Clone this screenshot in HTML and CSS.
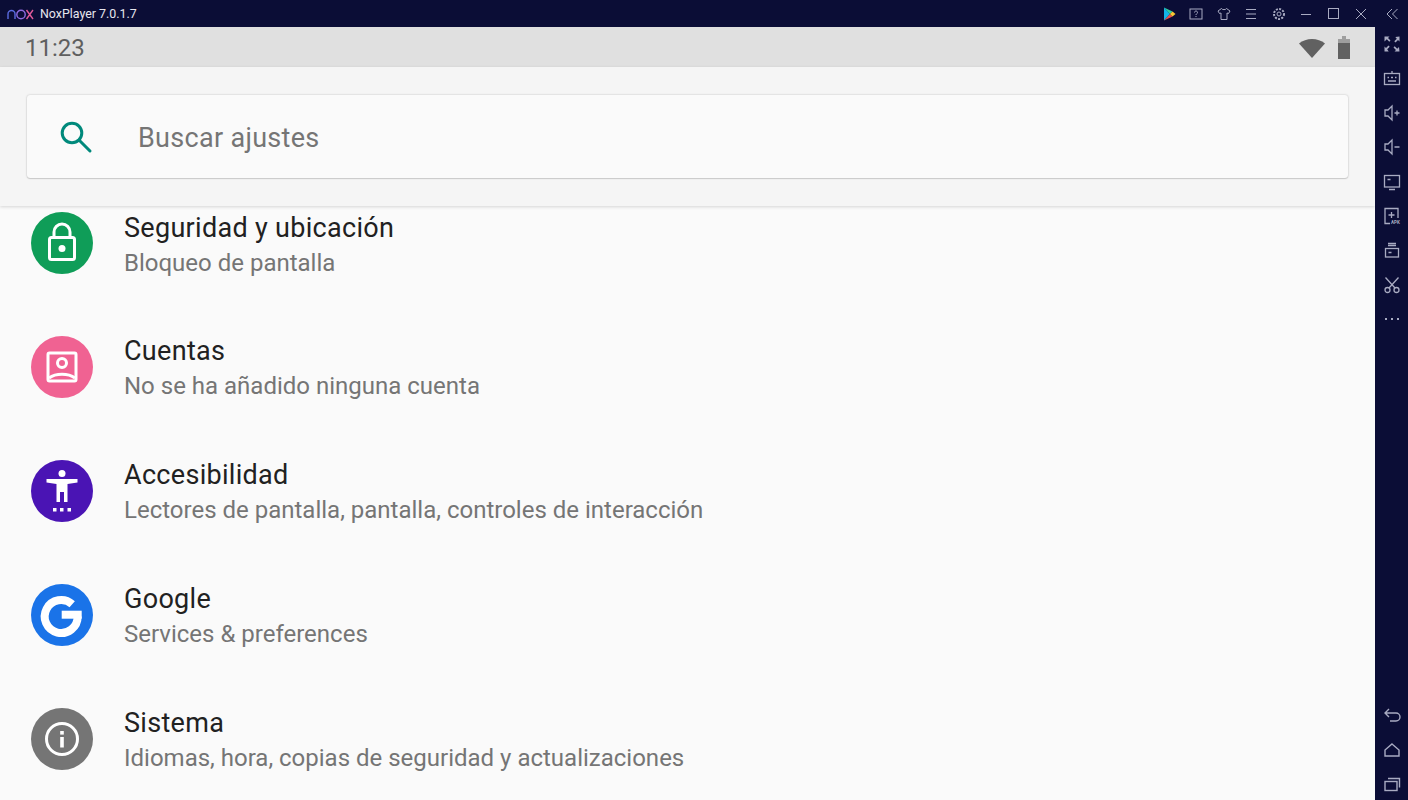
FILE: index.html
```html
<!DOCTYPE html>
<html lang="es">
<head>
    <meta charset="UTF-8">
    <title>NoxPlayer 7.0.1.7</title>
    <link rel="stylesheet" href="styles.css">
</head>
<body>

<div class="titlebar">
    <div class="brand">
        <svg class="nox-logo" width="27" height="12" viewBox="0 0 27 12" fill="none" stroke-width="1.400">
            <path d="M1 11V6a3.500 3.500 0 0 1 7 0v5" stroke="#5a6be0"/>
            <circle cx="14" cy="6.500" r="4.200" stroke="#8f6be0"/>
            <path d="M19.500 2l6.500 9M26 2l-6.500 9" stroke="#e05a9a"/>
        </svg>
        <span class="brand-name">NoxPlayer 7.0.1.7</span>
    </div>
    <div class="window-tools">
        <svg class="tool" width="14" height="14" viewBox="0 0 14 14">
            <path d="M2 0.500v13L8 7z" fill="#12b5e8"/>
            <path d="M2 0.500L8 7l2.500-2.500z" fill="#2fd0a0"/>
            <path d="M2 13.500L8 7l2.500 2.500z" fill="#e8504a"/>
            <path d="M8 7l2.500-2.500L13.500 7l-3 2.500z" fill="#f7c733"/>
        </svg>
        <svg class="tool" width="14" height="14" viewBox="0 0 14 14" fill="none" stroke="#a9abc2">
            <rect x="1" y="2" width="12" height="10"/>
            <path d="M5.500 5.500c0-2 3-2 3 0 0 1.200-1.500 1.200-1.500 2.500M7 9v1"/>
        </svg>
        <svg class="tool" width="14" height="14" viewBox="0 0 14 14" fill="none" stroke="#a9abc2">
            <path d="M4.500 1.500L1 4l1.500 2.500L4 6v6.500h6V6l1.500.5L13 4 9.500 1.500c-.5 1.500-4.500 1.500-5 0z"/>
        </svg>
        <svg class="tool" width="14" height="14" viewBox="0 0 14 14" fill="none" stroke="#a9abc2">
            <path d="M2 2.500h10M2 7h10M2 11.500h10"/>
        </svg>
        <svg class="tool" width="14" height="14" viewBox="0 0 14 14" fill="none" stroke="#a9abc2">
            <circle cx="7" cy="7" r="2"/>
            <circle cx="7" cy="7" r="5" stroke-width="2" stroke-dasharray="2 1.300"/>
        </svg>
        <svg class="tool" width="14" height="14" viewBox="0 0 14 14" fill="none" stroke="#a9abc2">
            <path d="M2 7.500h10"/>
        </svg>
        <svg class="tool" width="14" height="14" viewBox="0 0 14 14" fill="none" stroke="#a9abc2">
            <rect x="1.500" y="1.500" width="10" height="10"/>
        </svg>
        <svg class="tool" width="14" height="14" viewBox="0 0 14 14" fill="none" stroke="#a9abc2">
            <path d="M2 2l10 10M12 2L2 12"/>
        </svg>
        <svg class="tool collapse" width="14" height="14" viewBox="0 0 14 14" fill="none" stroke="#a9abc2">
            <path d="M7 2L2 7l5 5M12.500 2l-5 5 5 5"/>
        </svg>
    </div>
</div>

<div class="main">
    <div class="screen">
        <div class="statusbar">
            <span class="clock">11:23</span>
            <div class="status-icons">
                <svg width="28" height="21" viewBox="0 0 28 21">
                    <path d="M14 21L1 6.500C8 .5 20 .5 27 6.500z" fill="#616161"/>
                </svg>
                <svg width="14" height="23" viewBox="0 0 14 23">
                    <path d="M5 0h4v3h4v20H1V3h4z" fill="#616161"/>
                    <path d="M5 0h4v3h4v4H1V3h4z" fill="#9e9e9e"/>
                </svg>
            </div>
        </div>

        <div class="search-area">
            <div class="search-card">
                <svg class="search-icon" width="36" height="36" viewBox="0 0 36 36" fill="none" stroke="#00897b" stroke-width="3">
                    <circle cx="15" cy="14" r="9.800"/>
                    <path d="M22 21l11 11" stroke-linecap="round"/>
                </svg>
                <span class="search-text">Buscar ajustes</span>
            </div>
        </div>

        <div class="settings-list">
            <div class="setting-row">
                <div class="setting-icon green">
                    <svg width="62" height="62" viewBox="0 0 62 62" fill="none" stroke="#fff" stroke-width="3">
                        <rect x="18.500" y="25.500" width="25" height="22" rx="2"/>
                        <path d="M23 25v-5a8 8 0 0 1 16 0v5"/>
                        <circle cx="31" cy="36.500" r="3.500" fill="#fff" stroke="none"/>
                    </svg>
                </div>
                <div class="setting-text">
                    <div class="setting-title">Seguridad y ubicación</div>
                    <div class="setting-sub">Bloqueo de pantalla</div>
                </div>
            </div>
            <div class="setting-row">
                <div class="setting-icon pink">
                    <svg width="62" height="62" viewBox="0 0 62 62" fill="none" stroke="#fff" stroke-width="3">
                        <rect x="17" y="17" width="28" height="28" rx="1.500"/>
                        <circle cx="31" cy="27" r="4.500"/>
                        <path d="M18 42c7-5 19-5 26 0"/>
                    </svg>
                </div>
                <div class="setting-text">
                    <div class="setting-title">Cuentas</div>
                    <div class="setting-sub">No se ha añadido ninguna cuenta</div>
                </div>
            </div>
            <div class="setting-row">
                <div class="setting-icon purple">
                    <svg width="62" height="62" viewBox="0 0 62 62" fill="#fff">
                        <circle cx="31" cy="13.500" r="3.500"/>
                        <path d="M15.500 19h31v3.500L36.500 24v18H33V32h-4v10h-3.500V24l-10-1.500z"/>
                        <rect x="22" y="48" width="3.500" height="3.500"/>
                        <rect x="29" y="48" width="3.500" height="3.500"/>
                        <rect x="36.500" y="48" width="3.500" height="3.500"/>
                    </svg>
                </div>
                <div class="setting-text">
                    <div class="setting-title">Accesibilidad</div>
                    <div class="setting-sub">Lectores de pantalla, pantalla, controles de interacción</div>
                </div>
            </div>
            <div class="setting-row">
                <div class="setting-icon blue">
                    <svg width="62" height="62" viewBox="0 0 62 62">
                        <path d="M41.200 20.200A16.500 16.500 0 1 0 46.700 32.500" fill="none" stroke="#fff" stroke-width="8"/>
                        <rect x="30.700" y="26.700" width="20" height="8" fill="#fff"/>
                    </svg>
                </div>
                <div class="setting-text">
                    <div class="setting-title">Google</div>
                    <div class="setting-sub">Services &amp; preferences</div>
                </div>
            </div>
            <div class="setting-row">
                <div class="setting-icon grey">
                    <svg width="62" height="62" viewBox="0 0 62 62" fill="#fff">
                        <circle cx="31" cy="31" r="15.500" fill="none" stroke="#fff" stroke-width="3"/>
                        <rect x="29.200" y="29" width="3.600" height="10.500"/>
                        <rect x="29.200" y="23" width="3.600" height="3.600"/>
                    </svg>
                </div>
                <div class="setting-text">
                    <div class="setting-title">Sistema</div>
                    <div class="setting-sub">Idiomas, hora, copias de seguridad y actualizaciones</div>
                </div>
            </div>
        </div>
    </div>

    <div class="sidebar">
        <div class="side-group">
            <svg width="18" height="18" viewBox="0 0 18 18" fill="#a9abc2">
                <path d="M1.500 1.500h5L5 3l2.500 2.500-1.200 1.200L3.800 4.200 1.500 6.500zM16.500 1.500v5L15 5l-2.500 2.500-1.200-1.200 2.500-2.500-1.500-1.800zM1.500 16.500v-5L3 13l2.500-2.500 1.200 1.200-2.500 2.500 1.500 2.300zM16.500 16.500h-5L13 15l-2.500-2.500 1.200-1.200 2.500 2.500 1.800-1.800z"/>
            </svg>
            <svg width="18" height="18" viewBox="0 0 18 18" fill="none" stroke="#a9abc2" stroke-width="1.300">
                <rect x="1.500" y="4.500" width="15" height="11"/>
                <path d="M9 4.500V2M4.500 8.500h1.500M8 8.500h2M12 8.500h1.500M5 12h8"/>
            </svg>
            <svg width="18" height="18" viewBox="0 0 18 18" fill="none" stroke="#a9abc2" stroke-width="1.300">
                <path d="M2 6h3l4-4v14l-4-4H2zM11.500 9h5M14 6.500v5"/>
            </svg>
            <svg width="18" height="18" viewBox="0 0 18 18" fill="none" stroke="#a9abc2" stroke-width="1.300">
                <path d="M2 6h3l4-4v14l-4-4H2zM11.500 9h5"/>
            </svg>
            <svg width="18" height="18" viewBox="0 0 18 18" fill="none" stroke="#a9abc2" stroke-width="1.300">
                <rect x="1.500" y="2.500" width="15" height="11.500"/>
                <path d="M4.500 6.500h3M6 16.500h6"/>
            </svg>
            <svg width="18" height="18" viewBox="0 0 18 18" fill="none" stroke="#a9abc2" stroke-width="1.300">
                <path d="M7 16.500H2V1.500h13V11M8.500 5v6M5.500 8h6"/>
                <text class="apk-label" x="8" y="17">APK</text>
            </svg>
            <svg width="18" height="18" viewBox="0 0 18 18" fill="none" stroke="#a9abc2" stroke-width="1.300">
                <rect x="2.500" y="7.500" width="13" height="8.500"/>
                <path d="M5 4.500h8M5 2.500h8M5.500 11.500h3"/>
            </svg>
            <svg width="18" height="18" viewBox="0 0 18 18" fill="none" stroke="#a9abc2" stroke-width="1.300">
                <circle cx="4.500" cy="14" r="2.500"/>
                <circle cx="13.500" cy="14" r="2.500"/>
                <path d="M6 12L15.500 1.500M12 12L2.500 1.500"/>
            </svg>
            <svg width="18" height="18" viewBox="0 0 18 18" fill="#a9abc2">
                <rect x="2" y="8" width="2" height="2"/>
                <rect x="8" y="8" width="2" height="2"/>
                <rect x="14" y="8" width="2" height="2"/>
            </svg>
        </div>
        <div class="side-group">
            <svg width="18" height="18" viewBox="0 0 18 18" fill="none" stroke="#a9abc2" stroke-width="1.400">
                <path d="M6 3L2 7l4 4M2 7h11a3 3 0 0 1 0 8H7"/>
            </svg>
            <svg width="18" height="18" viewBox="0 0 18 18" fill="none" stroke="#a9abc2" stroke-width="1.400">
                <path d="M9 3l7 6v6H2V9z"/>
            </svg>
            <svg width="18" height="18" viewBox="0 0 18 18" fill="none" stroke="#a9abc2" stroke-width="1.400">
                <rect x="2" y="6.500" width="12" height="9"/>
                <path d="M5 3.500h11.500v9"/>
            </svg>
        </div>
    </div>
</div>

</body>
</html>
```

FILE: styles.css
```css
* {
    box-sizing: border-box;
}
html, body {
    margin: 0;
    height: 800px;
    overflow: hidden;
}
body {
    font-family: 'Roboto', 'Liberation Sans', sans-serif;
    background-color: #0b0d36;
    display: flex;
    flex-direction: column;
}
svg {
    display: block;
    flex-shrink: 0;
}
.titlebar {
    height: 27px;
    background-color: #0b0d36;
    display: flex;
    justify-content: space-between;
    align-items: center;
    padding: 0 9px 0 7px;
}
.brand {
    display: flex;
    align-items: center;
    gap: 6px;
}
.brand-name {
    color: #e6e6ee;
    font-size: 12.4px;
}
.window-tools {
    display: flex;
    align-items: center;
    gap: 13.5px;
}
.collapse {
    margin-left: 3.5px;
}
.main {
    flex: 1;
    display: flex;
    min-height: 0;
}
.screen {
    flex: 1;
    background-color: #fafafa;
    overflow: hidden;
}
.statusbar {
    height: 40px;
    background-color: #e0e0e0;
    display: flex;
    justify-content: space-between;
    align-items: center;
    padding: 0 24px 0 25px;
}
.clock {
    font-size: 24px;
    color: #5f5f5f;
    padding-top: 2px;
}
.status-icons {
    display: flex;
    align-items: center;
    gap: 11px;
}
.search-area {
    height: 139px;
    background-color: #f5f5f5;
    padding: 28px 27px 0;
    box-shadow: 0 1px 3px rgba(0, 0, 0, 0.15);
    position: relative;
}
.search-card {
    height: 83px;
    background-color: #fafafa;
    border-radius: 3px;
    box-shadow: 0 0 2px rgba(0, 0, 0, 0.25), 0 1px 1px rgba(0, 0, 0, 0.12);
    display: flex;
    align-items: center;
    padding-left: 30px;
    gap: 45px;
}
.search-text {
    font-size: 27px;
    letter-spacing: 0.3px;
    color: #757575;
    padding-top: 2px;
}
.settings-list {
    display: flex;
    flex-direction: column;
    gap: 61.9px;
    padding: 6px 0 0 31px;
}
.setting-row {
    height: 62px;
    display: flex;
    align-items: center;
    gap: 31px;
}
.setting-icon {
    width: 62px;
    height: 62px;
    border-radius: 50%;
    flex-shrink: 0;
}
.green { background-color: #0f9d58; }
.pink { background-color: #f06292; }
.purple { background-color: #4a14b4; }
.blue { background-color: #1a73e8; }
.grey { background-color: #757575; }
.setting-text {
    padding-top: 5px;
}
.setting-title {
    font-size: 27px;
    line-height: 34px;
    letter-spacing: 0.3px;
    color: #212121;
}
.setting-sub {
    font-size: 24px;
    line-height: 35px;
    margin-top: 1px;
    color: #757575;
}
.sidebar {
    width: 33px;
    background-color: #0b0d36;
    display: flex;
    flex-direction: column;
    justify-content: space-between;
    align-items: center;
    padding: 8px 0 7px;
}
.side-group {
    display: flex;
    flex-direction: column;
    gap: 16.4px;
}
.apk-label {
    font-size: 4.5px;
    font-weight: 700;
    fill: #a9abc2;
    stroke: none;
}
```
